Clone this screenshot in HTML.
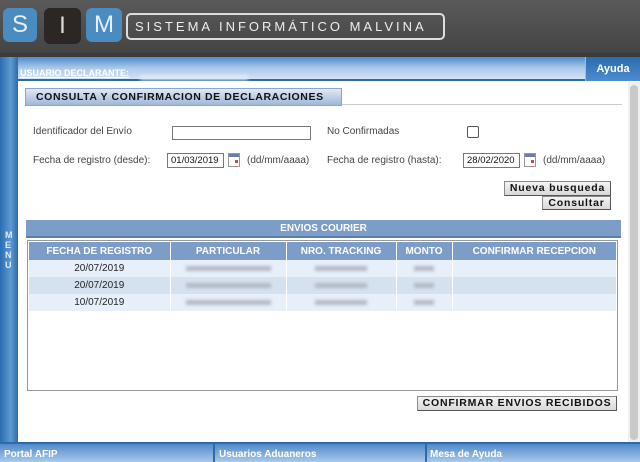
<!DOCTYPE html>
<html><head><style>
*{margin:0;padding:0;box-sizing:border-box}
body{width:640px;height:462px;overflow:hidden;font-family:"Liberation Sans",Arial,sans-serif;background:#fff;position:relative;font-size:11px}
.a{position:absolute}
.btn{position:absolute;background:linear-gradient(#f4f4f4,#d8d8d8);border:1px solid #8a8a8a;border-right-color:#555;border-bottom-color:#555;font-weight:bold;font-size:10.5px;letter-spacing:.8px;text-align:center;color:#111;line-height:12px}
.lbl{position:absolute;color:#444;font-size:10px}
.inp{position:absolute;border:1px solid #777;background:#fff;font-size:9.5px;color:#111;padding-left:3px;line-height:13px}
.cal{position:absolute;width:12px;height:14px;border:1px solid #999;background:linear-gradient(#6a7ea8 0 3px,#fff 3px)}
.cal:after{content:"";position:absolute;left:6px;top:6px;width:3px;height:3px;background:#d44}
.blur{display:inline-block;height:5px;background:#b4b9c4;filter:blur(1.5px)}
table{border-collapse:collapse}
</style></head><body>
<div class="a" style="left:0;top:0;width:640px;height:53px;background:linear-gradient(#5a5a5a,#444)"></div>
<div class="a" style="left:0;top:53px;width:640px;height:4px;background:#3a3a3a"></div>
<div class="a" style="left:3px;top:8px;width:34px;height:34px;border-radius:6px;background:#4a8bc0;color:#e8eef6;font-size:24px;line-height:34px;text-align:center">S</div>
<div class="a" style="left:44px;top:8px;width:37px;height:36px;border-radius:6px;background:#2c2624;color:#ddd;font-size:24px;line-height:36px;text-align:center">I</div>
<div class="a" style="left:86px;top:8px;width:36px;height:34px;border-radius:6px;background:#4a8bc0;color:#e8eef6;font-size:24px;line-height:34px;text-align:center">M</div>
<div class="a" style="left:126px;top:13px;width:319px;height:27px;border:2px solid #ddd;border-radius:5px;color:#eee;font-size:13px;letter-spacing:3px;line-height:23px;padding-left:7px;white-space:nowrap">SISTEMA INFORMÁTICO MALVINA</div>
<div class="a" style="left:0;top:57px;width:18px;height:386px;background:linear-gradient(90deg,#2a6cb0,#5d9ad2 60%,#2f6aa8)"></div>
<div class="a" style="left:5px;top:230px;width:8px;color:#dfe9f6;font-size:9px;font-weight:bold;line-height:10px">M<br>E<br>N<br>U</div>
<div class="a" style="left:18px;top:57px;width:567px;height:24px;background:linear-gradient(#4f8ac9,#a9c9ea 50%,#d4e4f4);border-bottom:2px solid #2f6aa8"></div>
<div class="a" style="left:20px;top:68px;color:#fff;font-size:9px;font-weight:bold;text-decoration:underline">USUARIO DECLARANTE:</div>
<div class="a" style="left:140px;top:71px"><span class="blur" style="width:108px;background:#dde8f4"></span></div>
<div class="a" style="left:585px;top:57px;width:55px;height:24px;background:linear-gradient(#2a6cb0,#4d8bcc);border-left:1px solid #9bbce0;color:#fff;font-weight:bold;font-size:11px;text-align:center;line-height:24px">Ayuda</div>
<div class="a" style="left:628px;top:82px;width:12px;height:360px;background:#f0f0f0"></div>
<div class="a" style="left:630px;top:85px;width:8px;height:355px;background:#c9c9c9;border-radius:4px"></div>
<div class="a" style="left:25px;top:88px;width:317px;height:18px;background:linear-gradient(#dfe8f4,#9fb7d8);border:1px solid #8ca6c8;font-weight:bold;font-size:10.5px;letter-spacing:.6px;padding-left:10px;line-height:16px;color:#111">CONSULTA Y CONFIRMACION DE DECLARACIONES</div>
<div class="a" style="left:342px;top:104px;width:280px;height:1px;background:#ccc"></div>
<div class="lbl" style="left:33px;top:126px">Identificador del Envío</div>
<div class="inp" style="left:172px;top:126px;width:139px;height:14px"></div>
<div class="lbl" style="left:327px;top:126px">No Confirmadas</div>
<div class="a" style="left:467px;top:126px;width:12px;height:12px;border:1px solid #555;border-radius:2px"></div>
<div class="lbl" style="left:33px;top:155px">Fecha de registro (desde):</div>
<div class="inp" style="left:167px;top:153px;width:57px;height:15px">01/03/2019</div>
<div class="cal" style="left:228px;top:153px"></div>
<div class="lbl" style="left:247px;top:155px">(dd/mm/aaaa)</div>
<div class="lbl" style="left:327px;top:155px">Fecha de registro (hasta):</div>
<div class="inp" style="left:463px;top:153px;width:57px;height:15px">28/02/2020</div>
<div class="cal" style="left:524px;top:153px"></div>
<div class="lbl" style="left:543px;top:155px">(dd/mm/aaaa)</div>
<div class="btn" style="left:504px;top:181px;width:107px;height:15px">Nueva busqueda</div>
<div class="btn" style="left:542px;top:196px;width:69px;height:14px">Consultar</div>
<div class="a" style="left:26px;top:220px;width:595px;height:18px;background:#7c9dc8;border-bottom:2px solid #5a7fae;color:#fff;font-weight:bold;font-size:10px;text-align:center;line-height:17px">ENVIOS COURIER</div>
<div class="a" style="left:27px;top:240px;width:591px;height:151px;border:1px solid #999;background:#fff"></div>
<table class="a" style="left:29px;top:242px;width:587px;font-size:10px">
<tr style="background:#7c9dc8;color:#fff;font-weight:bold;height:18px"><td style="width:141px;text-align:center;border-right:1px solid #fff">FECHA DE REGISTRO</td><td style="width:116px;text-align:center;border-right:1px solid #fff">PARTICULAR</td><td style="width:110px;text-align:center;border-right:1px solid #fff">NRO. TRACKING</td><td style="width:56px;text-align:center;border-right:1px solid #fff">MONTO</td><td style="text-align:center">CONFIRMAR RECEPCION</td></tr>
<tr style="background:#e6effa;height:17px;color:#222"><td style="text-align:center;border-right:1px solid #fff">20/07/2019</td><td style="text-align:center;border-right:1px solid #fff"><span class="blur" style="width:85px"></span></td><td style="text-align:center;border-right:1px solid #fff"><span class="blur" style="width:52px"></span></td><td style="text-align:center;border-right:1px solid #fff"><span class="blur" style="width:20px"></span></td><td></td></tr>
<tr style="background:#d6e1ef;height:17px;color:#222"><td style="text-align:center;border-right:1px solid #fff">20/07/2019</td><td style="text-align:center;border-right:1px solid #fff"><span class="blur" style="width:85px"></span></td><td style="text-align:center;border-right:1px solid #fff"><span class="blur" style="width:52px"></span></td><td style="text-align:center;border-right:1px solid #fff"><span class="blur" style="width:20px"></span></td><td></td></tr>
<tr style="background:#e6effa;height:17px;color:#222"><td style="text-align:center;border-right:1px solid #fff">10/07/2019</td><td style="text-align:center;border-right:1px solid #fff"><span class="blur" style="width:85px"></span></td><td style="text-align:center;border-right:1px solid #fff"><span class="blur" style="width:52px"></span></td><td style="text-align:center;border-right:1px solid #fff"><span class="blur" style="width:20px"></span></td><td></td></tr>
</table>
<div class="btn" style="left:417px;top:396px;width:200px;height:15px">CONFIRMAR ENVIOS RECIBIDOS</div>
<div class="a" style="left:0;top:442px;width:640px;height:20px;background:linear-gradient(#4f8ac9,#a9c9ea);border-top:2px solid #2f6aa8"></div>
<div class="a" style="left:213px;top:444px;width:2px;height:18px;background:#2f6aa8"></div>
<div class="a" style="left:425px;top:444px;width:2px;height:18px;background:#2f6aa8"></div>
<div class="a" style="left:4px;top:449px;color:#fff;font-weight:bold;font-size:10px">Portal AFIP</div>
<div class="a" style="left:219px;top:449px;color:#fff;font-weight:bold;font-size:10px">Usuarios Aduaneros</div>
<div class="a" style="left:430px;top:449px;color:#fff;font-weight:bold;font-size:10px">Mesa de Ayuda</div>
</body></html>
